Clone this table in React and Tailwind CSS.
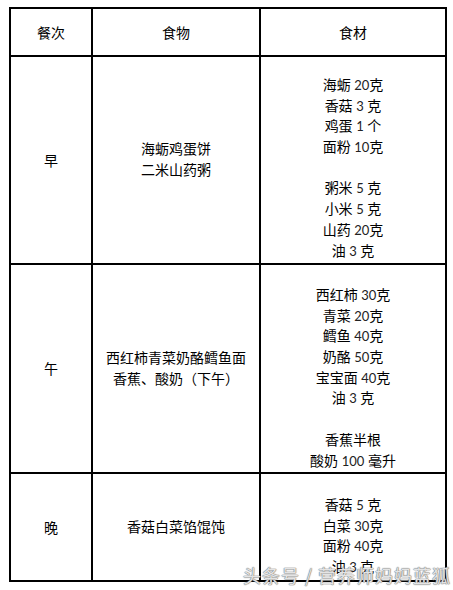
import React from "react";

const FONT = "font-['Lato','Noto_Sans_CJK_SC',sans-serif]";

function Line({ text }) {
  if (!text) return <div className="h-[20.7px]" />;
  const parts = text.split(/(\d+)/);
  return (
    <div className="h-[20.7px] leading-[20.7px] whitespace-pre">
      {parts.map((p, i) =>
        /^\d+$/.test(p) ? (
          <span key={i} className="text-[13px] text-[#222]">
            {p}
          </span>
        ) : (
          <span key={i}>{p}</span>
        )
      )}
    </div>
  );
}

const rows = [
  {
    meal: "早",
    food: ["海蛎鸡蛋饼", "二米山药粥"],
    ing: ["海蛎 20克", "香菇 3 克", "鸡蛋 1 个", "面粉 10克", "", "粥米 5 克", "小米 5 克", "山药 20克", "油 3 克"],
    h: "h-[208px]",
    pt: "pt-[18px]",
  },
  {
    meal: "午",
    food: ["西红柿青菜奶酪鳕鱼面", "香蕉、酸奶（下午）"],
    ing: ["西红柿 30克", "青菜 20克", "鳕鱼 40克", "奶酪 50克", "宝宝面 40克", "油 3 克", "", "香蕉半根", "酸奶 100 毫升"],
    h: "h-[209px]",
    pt: "pt-[20px]",
  },
  {
    meal: "晚",
    food: ["香菇白菜馅馄饨"],
    ing: ["香菇 5 克", "白菜 30克", "面粉 40克", "油 3 克"],
    h: "h-[108px]",
    pt: "pt-[21px]",
  },
];

export default function App() {
  return (
    <div className={`relative w-[453px] h-[590px] bg-white pl-[9px] pt-[7px] text-[14px] text-black ${FONT}`}>
      <div className="w-[438px] border-t-2 border-l-2 border-black grid grid-cols-[82px_168px_186px]">
        <div className="h-[48px] border-r-2 border-b-2 border-black flex items-center justify-center">餐次</div>
        <div className="h-[48px] border-r-2 border-b-2 border-black flex items-center justify-center">食物</div>
        <div className="h-[48px] border-r-2 border-b-2 border-black flex items-center justify-center">食材</div>
        {rows.map((r) => (
          <React.Fragment key={r.meal}>
            <div className={`${r.h} border-r-2 border-b-2 border-black flex items-center justify-center`}>
              {r.meal}
            </div>
            <div className={`${r.h} border-r-2 border-b-2 border-black flex flex-col items-center justify-center`}>
              {r.food.map((f) => (
                <Line key={f} text={f} />
              ))}
            </div>
            <div className={`${r.h} ${r.pt} border-r-2 border-b-2 border-black flex flex-col items-center overflow-hidden`}>
              {r.ing.map((t, i) => (
                <Line key={i} text={t} />
              ))}
            </div>
          </React.Fragment>
        ))}
      </div>
      <div className="absolute left-[243px] top-[565px] text-[18px] leading-[20px] tracking-[1px] whitespace-pre text-white/80 font-['Noto_Sans_CJK_SC',sans-serif] [text-shadow:0_0_1px_#777,0_0_1px_#777,0_0_1px_#777]">
        头条号 / 营养师妈妈蓝狐
      </div>
    </div>
  );
}
